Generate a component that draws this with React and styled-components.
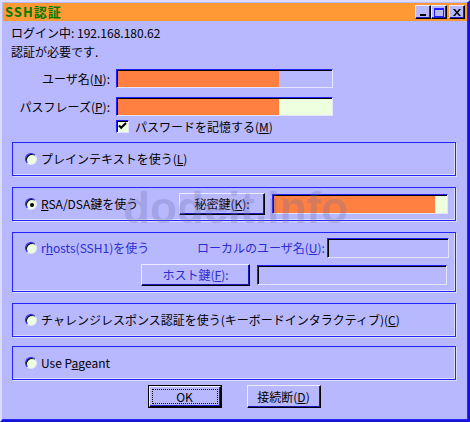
import React from "react";
import styled, { createGlobalStyle, css } from "styled-components";

const Global = createGlobalStyle`
  html, body { margin: 0; padding: 0; background: #b8b8ff; }
  body { font-family: "Noto Sans CJK JP", sans-serif; font-size: 12px; }
`;

const FONT = `"Noto Sans CJK JP", "Liberation Sans", sans-serif`;

const Window = styled.div`
  position: relative;
  width: 470px;
  height: 422px;
  box-sizing: border-box;
  background: #b8b8ff;
  border-style: solid;
  border-width: 2px;
  border-color: #dcdcff #1414d8 #1414d8 #dcdcff;
  box-shadow: inset -1px -1px 0 #2a2aff;
  padding: 1px;
  display: flex;
  flex-direction: column;
  font-family: ${FONT};
  font-size: 12px;
  color: #000;
  overflow: hidden;
`;

const TitleBar = styled.div`
  height: 18px;
  background: #ff9933;
  display: flex;
  align-items: center;
  justify-content: space-between;
  padding: 0 2px 0 2px;
`;

const TitleText = styled.span`
  color: #007a00;
  font-weight: bold;
  font-size: 13px;
  letter-spacing: 1px;
  line-height: 14px;
`;

const TitleButtons = styled.div`
  display: flex;
  align-items: center;
`;

const raised = css`
  background: #b8b8ff;
  border-style: solid;
  border-width: 1px;
  border-color: #ececff #000 #000 #ececff;
  box-shadow: inset -1px -1px 0 #2020c8;
  box-sizing: border-box;
`;

const TitleButton = styled.div`
  ${raised}
  width: 16px;
  height: 14px;
  margin-left: ${(p) => (p.$gap ? 2 : 0)}px;
  display: flex;
  align-items: center;
  justify-content: center;
`;

const Content = styled.div`
  display: flex;
  flex-direction: column;
  padding: 0 0 0 8px;
`;

const InfoLine = styled.div`
  height: 14px;
  line-height: 14px;
  margin-top: 5px;
  white-space: nowrap;
`;

const FieldRow = styled.div`
  display: grid;
  grid-template-columns: 99px 217px;
  column-gap: 6px;
  align-items: center;
  margin-top: ${(p) => p.$mt}px;
`;

const Label = styled.label`
  text-align: right;
  white-space: nowrap;
  line-height: 14px;
  color: ${(p) => (p.$disabled ? "#2c2cd0" : "#000")};
`;

const sunken = css`
  box-sizing: border-box;
  border-style: solid;
  border-width: 1px;
  border-color: #2020ff #e4e4ff #e4e4ff #2020ff;
  box-shadow: inset 1px 1px 0 #000;
`;

const TextBox = styled.div`
  ${sunken}
  width: ${(p) => p.$w}px;
  height: ${(p) => p.$h || 19}px;
  background: ${(p) => p.$bg || "#b8b8ff"};
  padding: 1px 0 0 1px;
  display: flex;
`;

const Fill = styled.div`
  background: #ff8040;
  height: 100%;
`;

const CheckRow = styled.div`
  display: flex;
  align-items: center;
  gap: 6px;
  margin-top: 3px;
  margin-left: 105px;
  height: 14px;
`;

const CheckBox = styled.div`
  ${sunken}
  width: 13px;
  height: 13px;
  background: #eeffe0;
  display: flex;
  align-items: center;
  justify-content: center;
`;

const Group = styled.div`
  box-sizing: border-box;
  width: 444px;
  height: ${(p) => p.$h || 34}px;
  margin-left: 1px;
  margin-top: ${(p) => p.$mt}px;
  border: 1px solid #2424ff;
  box-shadow: inset -1px -1px 0 #dcdcff, 1px 1px 0 #dcdcff;
  padding: ${(p) => (p.$stack ? "5px 0 0 12px" : "0 0 0 12px")};
  display: flex;
  flex-direction: ${(p) => (p.$stack ? "column" : "row")};
  align-items: ${(p) => (p.$stack ? "stretch" : "center")};
  gap: ${(p) => (p.$stack ? 6 : 0)}px;
`;

const Row = styled.div`
  display: flex;
  align-items: center;
  margin-left: ${(p) => p.$ml || 0}px;
  gap: ${(p) => p.$gap || 0}px;
`;

const RadioOption = styled.div`
  display: flex;
  align-items: center;
  gap: 4px;
  width: ${(p) => (p.$w ? `${p.$w}px` : "auto")};
  flex-shrink: 0;
  white-space: nowrap;
  line-height: 14px;
  color: ${(p) => (p.$disabled ? "#2c2cd0" : "#000")};
`;

const RadioCircle = styled.div`
  width: 12px;
  height: 12px;
  box-sizing: border-box;
  border-radius: 50%;
  background: #eeffe0;
  border: 1px solid;
  border-color: #2020ff #e4e4ff #e4e4ff #2020ff;
  box-shadow: inset 1px 1px 0 #000;
  display: flex;
  align-items: center;
  justify-content: center;
  &::after {
    content: "";
    display: ${(p) => (p.$checked ? "block" : "none")};
    width: 4px;
    height: 4px;
    border-radius: 50%;
    background: #000;
    margin: 1px 0 0 1px;
  }
`;

const PushButton = styled.div`
  ${raised}
  border-color: #ececff #000 #000 #ececff;
  box-shadow: inset -1px -1px 0 #1a1ab0;
  width: ${(p) => p.$w}px;
  height: ${(p) => p.$h || 22}px;
  display: flex;
  align-items: center;
  justify-content: center;
  white-space: nowrap;
  line-height: 14px;
  color: ${(p) => (p.$disabled ? "#2c2cd0" : "#000")};
  flex-shrink: 0;
`;

const DefaultButton = styled.div`
  box-sizing: border-box;
  width: 74px;
  height: 23px;
  border: 1px solid #000;
  display: flex;
`;

const DefaultInner = styled.div`
  ${raised}
  flex: 1;
  padding: 2px;
  display: flex;
`;

const FocusRect = styled.div`
  flex: 1;
  border: 1px dotted #000;
  display: flex;
  align-items: center;
  justify-content: center;
  line-height: 14px;
`;

const ButtonBar = styled.div`
  display: flex;
  justify-content: center;
  gap: 25px;
  margin-top: 5px;
  margin-left: -10px;
`;

const Watermark = styled.div`
  position: absolute;
  left: 121px;
  top: 184px;
  font-family: "Liberation Sans", sans-serif;
  font-weight: bold;
  font-size: 44px;
  line-height: 44px;
  color: rgba(110, 110, 170, 0.28);
  pointer-events: none;
`;

const U = styled.u`
  text-decoration: underline;
  text-underline-offset: 1px;
`;

export default function App() {
  return (
    <>
      <Global />
      <Window>
        <TitleBar>
          <TitleText>SSH認証</TitleText>
          <TitleButtons>
            <TitleButton>
              <svg width="8" height="8" viewBox="0 0 8 8">
                <rect x="1" y="6" width="6" height="2" fill="#000" />
              </svg>
            </TitleButton>
            <TitleButton>
              <svg width="10" height="9" viewBox="0 0 10 9">
                <rect x="0.5" y="0.5" width="9" height="8" fill="none" stroke="#2020ff" />
                <rect x="0" y="0" width="10" height="2" fill="#2020ff" />
              </svg>
            </TitleButton>
            <TitleButton $gap>
              <svg width="8" height="7" viewBox="0 0 8 7">
                <path d="M0 0h2l2 2.5L6 0h2L5 3.5 8 7H6L4 4.5 2 7H0l3-3.5z" fill="#000" />
              </svg>
            </TitleButton>
          </TitleButtons>
        </TitleBar>

        <Content>
          <InfoLine>ログイン中: 192.168.180.62</InfoLine>
          <InfoLine>認証が必要です.</InfoLine>

          <FieldRow $mt={10}>
            <Label>ユーザ名(<U>N</U>):</Label>
            <TextBox $w={217}>
              <Fill style={{ width: 161 }} />
            </TextBox>
          </FieldRow>
          <FieldRow $mt={9}>
            <Label>パスフレーズ(<U>P</U>):</Label>
            <TextBox $w={217} $bg="#eeffe0">
              <Fill style={{ width: 161 }} />
            </TextBox>
          </FieldRow>
          <CheckRow>
            <CheckBox>
              <svg width="9" height="8" viewBox="0 0 9 8">
                <path d="M1 3.5l2.2 2.3L8 1" fill="none" stroke="#000" strokeWidth="2" />
              </svg>
            </CheckBox>
            <span>パスワードを記憶する(<U>M</U>)</span>
          </CheckRow>

          <Group $mt={9}>
            <RadioOption>
              <RadioCircle />
              <span>プレインテキストを使う(<U>L</U>)</span>
            </RadioOption>
          </Group>

          <Group $mt={11}>
            <RadioOption $w={154}>
              <RadioCircle $checked />
              <span><U>R</U>SA/DSA鍵を使う</span>
            </RadioOption>
            <Row $gap={7}>
              <PushButton $w={86}>秘密鍵(<U>K</U>):</PushButton>
              <TextBox $w={176} $h={20} $bg="#eeffe0">
                <Fill style={{ width: 161 }} />
              </TextBox>
            </Row>
          </Group>

          <Group $mt={11} $h={60} $stack>
            <Row>
              <RadioOption $w={172} $disabled>
                <RadioCircle />
                <span>r<U>h</U>osts(SSH1)を使う</span>
              </RadioOption>
              <Row $gap={2}>
                <Label $disabled>ローカルのユーザ名(<U>U</U>):</Label>
                <TextBox $w={122} $h={20} />
              </Row>
            </Row>
            <Row $ml={116} $gap={7}>
              <PushButton $w={109} $disabled>ホスト鍵(<U>F</U>):</PushButton>
              <TextBox $w={190} $h={20} />
            </Row>
          </Group>

          <Group $mt={11}>
            <RadioOption>
              <RadioCircle />
              <span>チャレンジレスポンス認証を使う(キーボードインタラクティブ)(<U>C</U>)</span>
            </RadioOption>
          </Group>

          <Group $mt={9}>
            <RadioOption>
              <RadioCircle />
              <span>Use P<U>a</U>geant</span>
            </RadioOption>
          </Group>

          <ButtonBar>
            <DefaultButton>
              <DefaultInner>
                <FocusRect>OK</FocusRect>
              </DefaultInner>
            </DefaultButton>
            <PushButton $w={74} $h={23}>接続断(<U>D</U>)</PushButton>
          </ButtonBar>
        </Content>

        <Watermark>dodeit.info</Watermark>
      </Window>
    </>
  );
}
